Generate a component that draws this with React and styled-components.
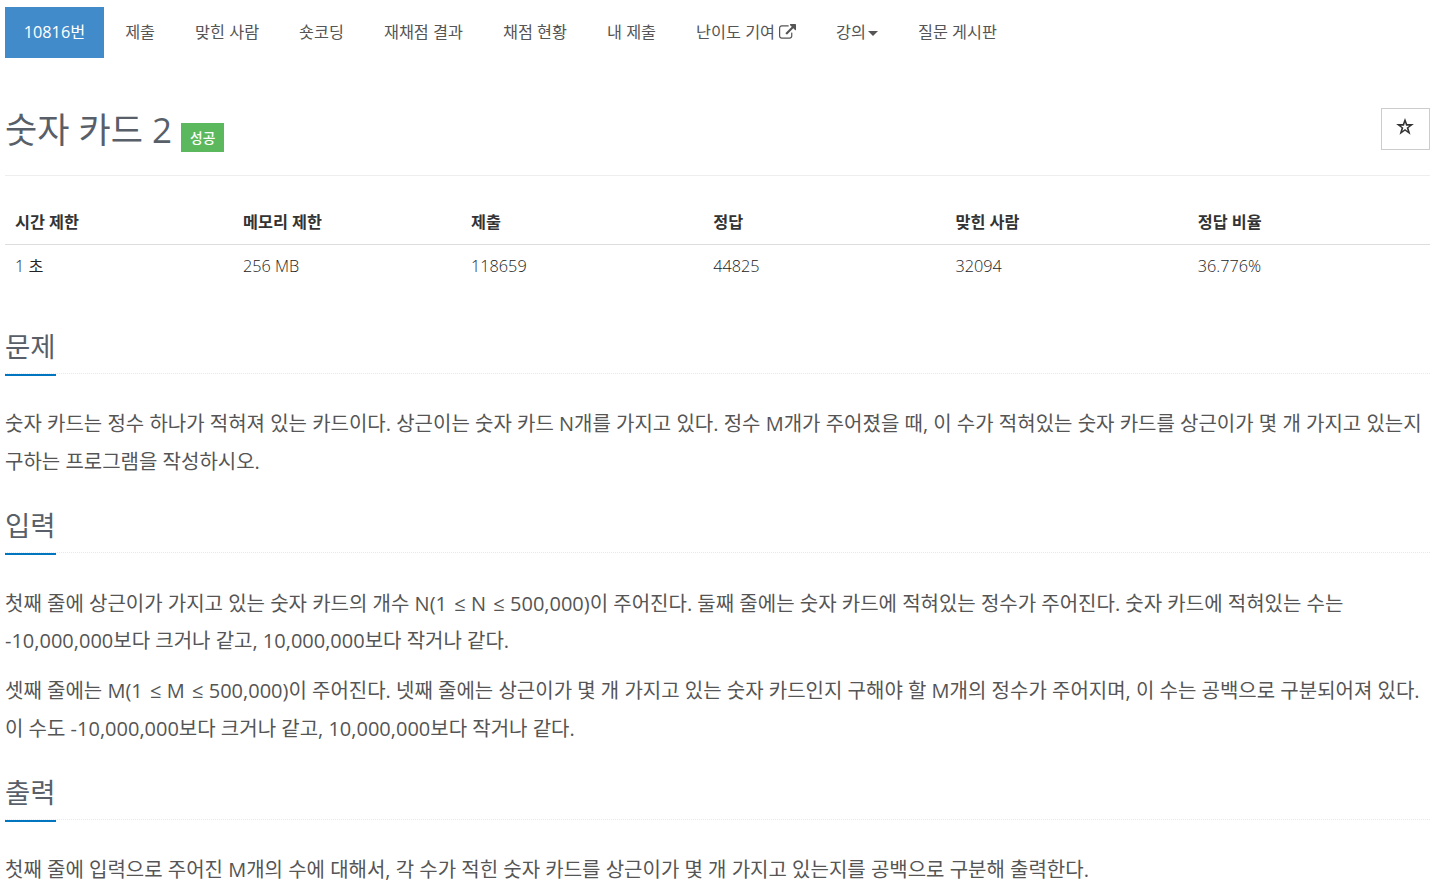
import styled, { createGlobalStyle } from "styled-components";

const GlobalStyle = createGlobalStyle`
  * {
    box-sizing: border-box;
  }
  body {
    margin: 0;
    background: #fff;
    color: #333;
    font-family: "Open Sans", "Noto Sans CJK KR", sans-serif;
    font-size: 16.25px;
    overflow: hidden;
  }
`;
const Container = styled.div`
  height: 884px;
  padding: 7px 4px 0 5px;
  overflow: hidden;
`;
const Menu = styled.ul`
  display: flex;
  gap: 2.5px;
  margin: 0;
  padding: 0;
  list-style: none;
`;
const MenuItem = styled.li`
  display: flex;
  align-items: center;
  height: 51px;
  padding: 0 18.75px 2px;
  line-height: 26px;
  white-space: pre;
  color: ${({ $active }) => ($active ? "#fff" : "#555")};
  background-color: ${({ $active }) => ($active ? "#428bca" : "transparent")};
`;
const Caret = styled.span`
  margin: 3px 0 0 2px;
  border-top: 5px solid;
  border-left: 5px solid transparent;
  border-right: 5px solid transparent;
`;
const LinkIcon = styled.svg`
  width: 17px;
  height: 16px;
  margin-left: 4px;
`;
const Header = styled.div`
  display: flex;
  justify-content: space-between;
  height: 118px;
  padding-top: 50px;
  border-bottom: 1px solid #eee;
`;
const TitleGroup = styled.div`
  display: flex;
  align-items: flex-start;
`;
const Title = styled.h1`
  margin: 0;
  font-size: 35px;
  font-weight: 400;
  line-height: 44px;
  color: #585f69;
`;
const Label = styled.span`
  height: 29px;
  margin: 15px 0 0 9px;
  padding: 0 9px;
  font-size: 13.75px;
  font-weight: 500;
  line-height: 29px;
  color: #fff;
  background-color: #5cb85c;
`;
const StarButton = styled.button`
  display: flex;
  justify-content: center;
  width: 49px;
  height: 42px;
  padding: 9px 2px 0 0;
  border: 1px solid #ccc;
  background: #fff;
  color: #333;
`;
const Table = styled.div`
  display: grid;
  grid-template-columns: 16fr 16fr 17fr 17fr 17fr 17fr;
  margin-top: 24px;
`;
const HeadCell = styled.div`
  height: 45px;
  padding: 9px 10px;
  border-bottom: 1px solid #ddd;
  font-weight: 700;
  line-height: 26px;
`;
const Cell = styled.div`
  height: 44px;
  padding: 8px 10px;
  font-weight: 350;
  line-height: 26px;
  color: #222;
`;
const Section = styled.section`
  padding-top: ${({ $first }) => ($first ? "37px" : "12.5px")};
`;
const Headline = styled.div`
  height: 48px;
  margin-bottom: 31.25px;
  border-bottom: 1px dotted #e4e9f0;
`;
const HeadlineText = styled.h2`
  display: inline-block;
  height: 50px;
  margin: 0;
  border-bottom: 2px solid #0076c0;
  font-size: 27.5px;
  font-weight: 400;
  line-height: 41px;
  color: #585f69;
`;
const Paragraph = styled.p`
  margin: 0 0 12.5px;
  font-size: 20px;
  line-height: 37.5px;
  white-space: pre-line;
  color: #555;
`;
const LessEqual = styled.span`
  display: inline-block;
  width: 13.6px;
  padding-left: 2px;
  font-size: 20px;
  line-height: 1;
`;

const stats = [
  ["시간 제한", "1 초"],
  ["메모리 제한", "256 MB"],
  ["제출", "118659"],
  ["정답", "44825"],
  ["맞힌 사람", "32094"],
  ["정답 비율", "36.776%"],
];

const ExternalLink = () => (
  <LinkIcon viewBox="0 0 1792 1664" fill="currentColor">
    <path d="M1408 928v320q0 119-84.500 203.500t-203.500 84.500h-832q-119 0-203.500-84.500t-84.500-203.500v-832q0-119 84.500-203.500t203.500-84.500h704q14 0 23 9t9 23v64q0 14-9 23t-23 9h-704q-66 0-113 47t-47 113v832q0 66 47 113t113 47h832q66 0 113-47t47-113v-320q0-14 9-23t23-9h64q14 0 23 9t9 23zM1792 64v512q0 26-19 45t-45 19-45-19l-176-176-652 652q-10 10-23 10t-23-10l-114-114q-10-10-10-23t10-23l652-652-176-176q-19-19-19-45t19-45 45-19h512q26 0 45 19t19 45z" />
  </LinkIcon>
);

const Star = () => (
  <svg width="18" height="18" viewBox="0 0 18 18">
    <path
      fill="currentColor"
      fillRule="evenodd"
      d="M9 0l2.200 6.100h6.700l-5.400 4 2 6.700-5.500-4.100-5.500 4.100 2-6.700-5.400-4h6.700zM9 4.500l-1 3.200h-3.300l2.700 2-1.100 3.400 2.700-2 2.700 2-1.100-3.400 2.700-2h-3.300z"
    />
  </svg>
);

const Limit = ({ name }) => (
  <>
    {name}(1 <LessEqual>≤</LessEqual> {name} <LessEqual>≤</LessEqual> 500,000)
  </>
);

const ProblemSection = ({ title, first, children }) => (
  <Section $first={first}>
    <Headline>
      <HeadlineText>{title}</HeadlineText>
    </Headline>
    {children}
  </Section>
);

export default function App() {
  return (
    <Container>
      <GlobalStyle />
      <Menu>
        <MenuItem $active>10816번</MenuItem>
        <MenuItem>제출</MenuItem>
        <MenuItem>맞힌 사람</MenuItem>
        <MenuItem>숏코딩</MenuItem>
        <MenuItem>재채점 결과</MenuItem>
        <MenuItem>채점 현황</MenuItem>
        <MenuItem>내 제출</MenuItem>
        <MenuItem>
          난이도 기여
          <ExternalLink />
        </MenuItem>
        <MenuItem>
          강의
          <Caret />
        </MenuItem>
        <MenuItem>질문 게시판</MenuItem>
      </Menu>
      <Header>
        <TitleGroup>
          <Title>숫자 카드 2</Title>
          <Label>성공</Label>
        </TitleGroup>
        <StarButton>
          <Star />
        </StarButton>
      </Header>
      <Table>
        {stats.map(([name]) => (
          <HeadCell key={name}>{name}</HeadCell>
        ))}
        {stats.map(([name, value]) => (
          <Cell key={name}>{value}</Cell>
        ))}
      </Table>
      <ProblemSection title="문제" first>
        <Paragraph>
          숫자 카드는 정수 하나가 적혀져 있는 카드이다. 상근이는 숫자 카드 N개를 가지고 있다. 정수 M개가 주어졌을 때, 이 수가 적혀있는 숫자 카드를 상근이가 몇 개 가지고 있는지
          <br />
          구하는 프로그램을 작성하시오.
        </Paragraph>
      </ProblemSection>
      <ProblemSection title="입력">
        <Paragraph>
          첫째 줄에 상근이가 가지고 있는 숫자 카드의 개수 <Limit name="N" />이 주어진다. 둘째 줄에는 숫자 카드에 적혀있는 정수가 주어진다. 숫자 카드에 적혀있는 수는
          <br />
          -10,000,000보다 크거나 같고, 10,000,000보다 작거나 같다.
        </Paragraph>
        <Paragraph>
          셋째 줄에는 <Limit name="M" />이 주어진다. 넷째 줄에는 상근이가 몇 개 가지고 있는 숫자 카드인지 구해야 할 M개의 정수가 주어지며, 이 수는 공백으로 구분되어져 있다.
          <br />
          이 수도 -10,000,000보다 크거나 같고, 10,000,000보다 작거나 같다.
        </Paragraph>
      </ProblemSection>
      <ProblemSection title="출력">
        <Paragraph>
          첫째 줄에 입력으로 주어진 M개의 수에 대해서, 각 수가 적힌 숫자 카드를 상근이가 몇 개 가지고 있는지를 공백으로 구분해 출력한다.
        </Paragraph>
      </ProblemSection>
    </Container>
  );
}
